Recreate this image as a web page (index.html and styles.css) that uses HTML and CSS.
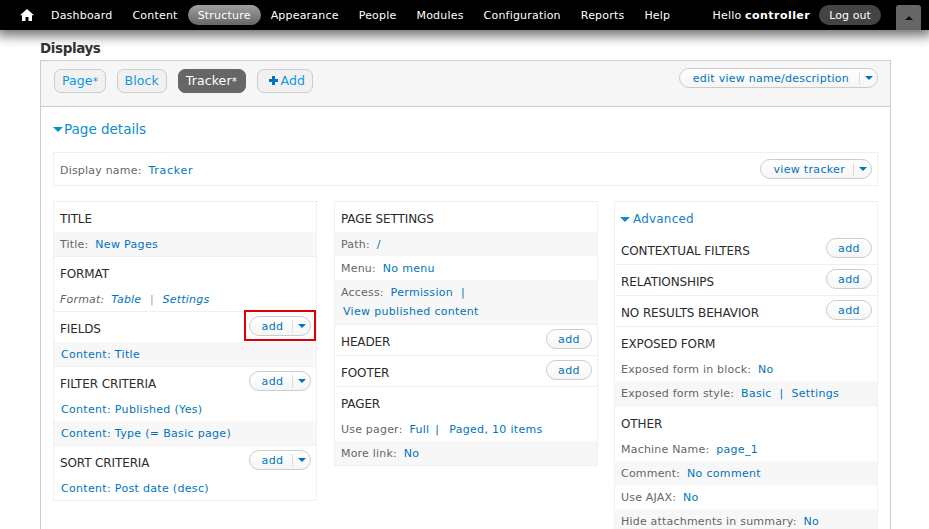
FILE: index.html
```html
<!DOCTYPE html>
<html lang="en">
<head>
<meta charset="utf-8">
<title>Displays</title>
<link rel="stylesheet" href="styles.css">
</head>
<body>
<header class="toolbar">
  <nav class="menu">
    <a class="home" href="#"><svg width="14" height="12" viewBox="0 0 14 12"><path d="M7 0 L14 6.3 L12 6.3 L12 12 L8.5 12 L8.5 8 L5.5 8 L5.5 12 L2 12 L2 6.3 L0 6.3 Z" fill="#fff"/></svg></a>
    <a href="#">Dashboard</a><a href="#">Content</a><a class="on" href="#">Structure</a><a href="#">Appearance</a><a href="#">People</a><a href="#">Modules</a><a href="#">Configuration</a><a href="#">Reports</a><a href="#">Help</a>
  </nav>
  <div class="user">
    <span>Hello <b>controller</b></span>
    <a class="logout" href="#">Log out</a>
    <a class="drawer" href="#"><i class="up"></i></a>
  </div>
</header>
<main class="page">
  <h2 class="title">Displays</h2>
  <section class="box">
    <div class="tabs">
      <a class="tab" href="#">Page<span class="star">*</span></a>
      <a class="tab" href="#">Block</a>
      <a class="tab active" href="#">Tracker<span class="star">*</span></a>
      <a class="tab tab-add" href="#"><svg class="plus" width="9" height="9" viewBox="0 0 9 9"><path d="M3 0h3v3h3v3H6v3H3V6H0V3h3z" fill="#0074bd"/></svg>Add</a>
      <span class="drop wide"><a href="#">edit view name/description</a><span class="caret"><i></i></span></span>
    </div>
    <div class="details">
      <h3 class="legend"><i></i>Page details</h3>
      <div class="name"><span class="lbl">Display name:</span> <a class="name-link" href="#">Tracker</a>
        <span class="drop view"><a href="#">view tracker</a><span class="caret"><i></i></span></span>
      </div>
      <div class="cols">
        <div class="col">
          <div class="head">TITLE</div>
          <div class="row alt line"><span class="lbl">Title:</span> <a href="#">New Pages</a></div>
          <div class="head">FORMAT</div>
          <div class="row em line"><span class="lbl">Format:</span> <a href="#">Table</a> <span class="sep">|</span> <a href="#">Settings</a></div>
          <div class="head">FIELDS<span class="drop add mark"><a href="#">add</a><span class="caret"><i></i></span></span></div>
          <div class="row alt line"><a href="#">Content: Title</a></div>
          <div class="head">FILTER CRITERIA<span class="drop add"><a href="#">add</a><span class="caret"><i></i></span></span></div>
          <div class="row"><a href="#">Content: Published (Yes)</a></div>
          <div class="row alt line"><a href="#">Content: Type (= Basic page)</a></div>
          <div class="head">SORT CRITERIA<span class="drop add"><a href="#">add</a><span class="caret"><i></i></span></span></div>
          <div class="row"><a href="#">Content: Post date (desc)</a></div>
        </div>
        <div class="col">
          <div class="head">PAGE SETTINGS</div>
          <div class="row alt"><span class="lbl">Path:</span> <a href="#">/</a></div>
          <div class="row"><span class="lbl">Menu:</span> <a href="#">No menu</a></div>
          <div class="row alt line"><span class="lbl">Access:</span> <a href="#">Permission</a> <a href="#">|</a><a class="sub" href="#">View published content</a></div>
          <div class="head line">HEADER<span class="pill"><a href="#">add</a></span></div>
          <div class="head line">FOOTER<span class="pill"><a href="#">add</a></span></div>
          <div class="head">PAGER</div>
          <div class="row"><span class="lbl">Use pager:</span> <a href="#">Full</a> <a class="bar" href="#">|</a> <a href="#">Paged, 10 items</a></div>
          <div class="row alt"><span class="lbl">More link:</span> <a href="#">No</a></div>
        </div>
        <div class="col">
          <div class="adv"><i></i>Advanced</div>
          <div class="head line">CONTEXTUAL FILTERS<span class="pill"><a href="#">add</a></span></div>
          <div class="head line">RELATIONSHIPS<span class="pill"><a href="#">add</a></span></div>
          <div class="head line">NO RESULTS BEHAVIOR<span class="pill"><a href="#">add</a></span></div>
          <div class="head">EXPOSED FORM</div>
          <div class="row"><span class="lbl">Exposed form in block:</span> <a href="#">No</a></div>
          <div class="row alt line"><span class="lbl">Exposed form style:</span> <a href="#">Basic</a> <a href="#">|</a> <a href="#">Settings</a></div>
          <div class="head tall">OTHER</div>
          <div class="row"><span class="lbl">Machine Name:</span> <a href="#">page_1</a></div>
          <div class="row alt"><span class="lbl">Comment:</span> <a href="#">No comment</a></div>
          <div class="row"><span class="lbl">Use AJAX:</span> <a href="#">No</a></div>
          <div class="row alt"><span class="lbl">Hide attachments in summary:</span> <a href="#">No</a></div>
        </div>
      </div>
    </div>
  </section>
</main>
</body>
</html>
```
FILE: styles.css
```css
* { box-sizing: border-box; }
html, body { margin: 0; height: 529px; overflow: hidden; background: #fff; }
body { font-family: "DejaVu Sans", sans-serif; font-size: 11px; color: #666; letter-spacing: .32px; }
a { color: #0074bd; text-decoration: none; }
i { display: block; }

.toolbar { height: 30px; background: #000; display: flex; justify-content: space-between; position: relative; box-shadow: 0 3px 12px 3px rgba(0,0,0,.55); z-index: 2; }
.menu { display: flex; align-items: center; padding-left: 20px; letter-spacing: .2px; }
.menu a { color: #fff; padding: 0 10px; line-height: 21px; height: 20px; border-radius: 10px; }
.menu .home { padding: 0; margin-right: 7px; height: 12px; line-height: 0; }
.menu .on { background: linear-gradient(#a0a0a0, #666); }
.user { display: flex; align-items: center; color: #fff; padding-right: 8px; letter-spacing: .2px; }
.user b { letter-spacing: .45px; }
.logout { color: #fff; background: #444; border-radius: 10px; height: 20px; line-height: 21px; padding: 0 10px; margin-left: 9px; letter-spacing: .1px; }
.drawer { width: 25px; height: 25px; background: #666; margin: 5px 0 0 15px; border-radius: 3px 3px 0 0; display: flex; align-items: center; justify-content: center; }
.up { border: 4px solid transparent; border-top: 0; border-bottom: 4px solid #111; }

.page { padding: 9px 38px 0 40px; }
.title { margin: 0 0 2px; font-size: 13.5px; line-height: 19px; color: #333; letter-spacing: -.4px; }
.box { border: 1px solid #ccc; border-bottom: 0; height: 500px; }
.tabs { height: 46px; background: #f6f6f6; border-bottom: 1px solid #ccc; display: flex; align-items: flex-start; padding-top: 8px; padding-left: 13px; }
.tab { height: 24px; line-height: 22px; font-size: 12.5px; letter-spacing: .1px; color: #0d9ae0; padding: 0 7px; background: #f1f1f1; border: 1px solid #ccc; border-radius: 7px; margin-right: 11px; }
.star { font-size: 10.5px; letter-spacing: -.4px; }
.tab.active { background: #666; color: #fff; border-color: #666; padding: 0 8px 0 7px; }
.tab-add { padding-left: 11px; }
.plus { margin-right: 3px; }
.drop { position: relative; background: linear-gradient(#fff, #f5f5f5); border: 1px solid #ccc; border-radius: 11px; height: 20px; display: inline-flex; align-items: center; line-height: 16px; font-size: 11px; }
.drop a { padding-top: 2px; }
.drop .caret { border-left: 1px solid #ddd; height: 13px; width: 18px; display: flex; align-items: center; justify-content: center; }
.caret i { border: 4px solid transparent; border-bottom: 0; border-top: 4px solid #0074bd; }
.wide { margin-left: auto; margin-right: 12px; padding-left: 13px; margin-top: -1px; letter-spacing: .26px; }
.wide a { padding-right: 10px; }

.details { padding: 0 12px; }
.legend { margin: 8px 0 0; height: 28px; font-size: 13.5px; line-height: 20px; color: #0d8dd0; font-weight: 400; display: flex; align-items: center; letter-spacing: 0; }
.legend i { border: 5px solid transparent; border-bottom: 0; border-top: 5px solid #0d8dd0; margin-right: 1px; }
.name { margin-top: 9px; height: 34px; border: 1px solid #f0f0f0; padding: 0 5px 0 6px; display: flex; align-items: center; gap: 3px; }
.name > .lbl, .name-link { padding-top: 2px; }
.name-link { letter-spacing: .7px; margin-left: 1px; }
.view { margin-left: auto; padding-left: 12px; }
.view a { padding-right: 8px; }
.cols { margin-top: 15px; display: flex; gap: 17px; align-items: flex-start; }
.col { flex: 0 0 264px; border: 1px solid #f0f0f0; }
.col:last-child { margin-left: -1px; }
.head { height: 30px; padding: 4px 5px 0 6px; display: flex; align-items: center; justify-content: space-between; color: #2b2b2b; font-size: 12px; letter-spacing: -.12px; }
.head.line { height: 31px; padding-bottom: 1px; }
.head.tall { height: 31px; }
.row { line-height: 22px; padding: 2px 6px 0; }
.row > a:first-child { margin-left: 1px; }
.alt { background: #f7f7f7; }
.line { border-bottom: 1px solid #f0f0f0; }
.em { font-style: italic; letter-spacing: .2px; }
.sep { color: #999; padding: 0 5px; }
.sub { display: block; line-height: 16px; padding-bottom: 4px; padding-left: 2px; }
.lbl { margin-right: 3px; letter-spacing: .2px; }
.row a + a { margin-left: 4px; }
.row a.sub { margin-left: 0; }
.row a.bar { margin-left: 2px; margin-right: 2px; }
.add { width: 62px; justify-content: flex-end; margin-top: -6px; letter-spacing: .5px; }
.add a { flex: 1; text-align: center; padding-left: 3px; }
.mark::after { content: ""; position: absolute; left: -6px; right: -6px; top: -7px; bottom: -6px; border: 2px solid #e00000; }
.pill { width: 46px; height: 20px; border: 1px solid #ccc; border-radius: 11px; background: linear-gradient(#fff, #f5f5f5); text-align: center; line-height: 16px; padding-top: 2px; margin-top: -6px; font-size: 11px; letter-spacing: .5px; }
.adv { height: 32px; padding: 2px 5px 0; display: flex; align-items: center; font-size: 12px; color: #1580c8; letter-spacing: .2px; }
.adv i { border: 5px solid transparent; border-bottom: 0; border-top: 5px solid #0d8dd0; margin-right: 3px; }
```
